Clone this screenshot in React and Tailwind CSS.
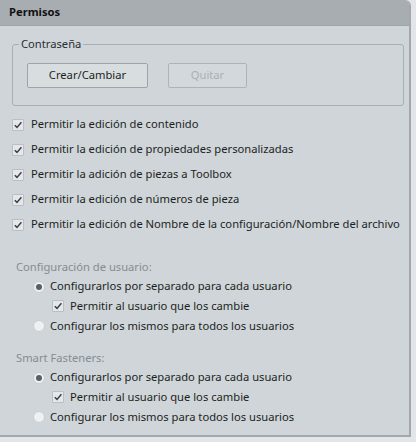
import React from "react";

const font = { fontFamily: '"Noto Sans", "Open Sans", sans-serif' };

function Check({ disabled }) {
  return (
    <span className="flex h-[12px] w-[12px] shrink-0 items-center justify-center rounded-[1px] border border-[#b9bfc4] bg-[#e4e8eb]">
      <svg width="10" height="10" viewBox="0 0 10 10">
        <path d="M1.8 5.2 L4 7.4 L8.4 2.2" fill="none" stroke={disabled ? "#9aa0a5" : "#3d4247"} strokeWidth="1.5" />
      </svg>
    </span>
  );
}

function Radio({ on }) {
  return (
    <span className="flex h-[12px] w-[12px] shrink-0 items-center justify-center rounded-full border border-[#c9ced2] bg-[#eef0f2]">
      {on && <span className="h-[6px] w-[6px] rounded-full bg-[#5a5f64]" />}
    </span>
  );
}

function CheckRow({ children }) {
  return (
    <div className="flex h-[25px] items-center gap-[7px] whitespace-nowrap">
      <Check />
      <span>{children}</span>
    </div>
  );
}

function Section({ title }) {
  return (
    <div className="flex flex-col whitespace-nowrap">
      <div className="h-[20px] pl-[16px] leading-[20px] text-[#868c92]">{title}</div>
      <div className="flex h-[19px] items-center gap-[5px] pl-[33px]">
        <Radio on />
        <span>Configurarlos por separado para cada usuario</span>
      </div>
      <div className="flex h-[20px] items-center gap-[6px] pl-[52px]">
        <Check />
        <span>Permitir al usuario que los cambie</span>
      </div>
      <div className="flex h-[20px] items-center gap-[5px] pl-[33px]">
        <Radio />
        <span>Configurar los mismos para todos los usuarios</span>
      </div>
    </div>
  );
}

export default function App() {
  return (
    <div className="h-[442px] w-[416px] bg-[#e3e6e9]" style={font}>
      <div className="flex h-[437px] w-[411px] flex-col overflow-hidden rounded-tr-[6px] border-r-2 border-b-2 border-[#a3a8ad] bg-[#cfd5d9] text-[11.2px] text-[#1c1f22]">
        <div className="flex h-[26px] items-center border-b border-[#9fa4a9] bg-[#a8adb2] pl-[9px] text-[11.2px] font-bold text-[#111]">
          Permisos
        </div>
        <div className="px-[12px] pt-[18px]">
          <div className="relative h-[62px] w-[392px] rounded-[3px] border border-[#a9aeb3]">
            <span className="absolute -top-[10px] left-[6px] bg-[#cfd5d9] px-[2px] leading-[18px] text-[#2a2e32]">
              Contraseña
            </span>
            <div className="flex gap-[20px] pl-[14px] pt-[18px]">
              <button className="h-[25px] w-[121px] rounded-[2px] border border-[#9fa4a9] bg-[#d8dde0] text-[11.2px] text-[#1c1f22]">
                Crear/Cambiar
              </button>
              <button className="h-[25px] w-[79px] rounded-[2px] border border-[#aeb3b7] bg-[#d3d8dc] text-[11.2px] text-[#aab0b5]">
                Quitar
              </button>
            </div>
          </div>
        </div>
        <div className="flex flex-col pl-[12px] pt-[6px]">
          <CheckRow>Permitir la edición de contenido</CheckRow>
          <CheckRow>Permitir la edición de propiedades personalizadas</CheckRow>
          <CheckRow>Permitir la adición de piezas a Toolbox</CheckRow>
          <CheckRow>Permitir la edición de números de pieza</CheckRow>
          <CheckRow>Permitir la edición de Nombre de la configuración/Nombre del archivo</CheckRow>
        </div>
        <div className="flex flex-col gap-[12px] pt-[20px]">
          <Section title="Configuración de usuario:" />
          <Section title="Smart Fasteners:" />
        </div>
      </div>
    </div>
  );
}
